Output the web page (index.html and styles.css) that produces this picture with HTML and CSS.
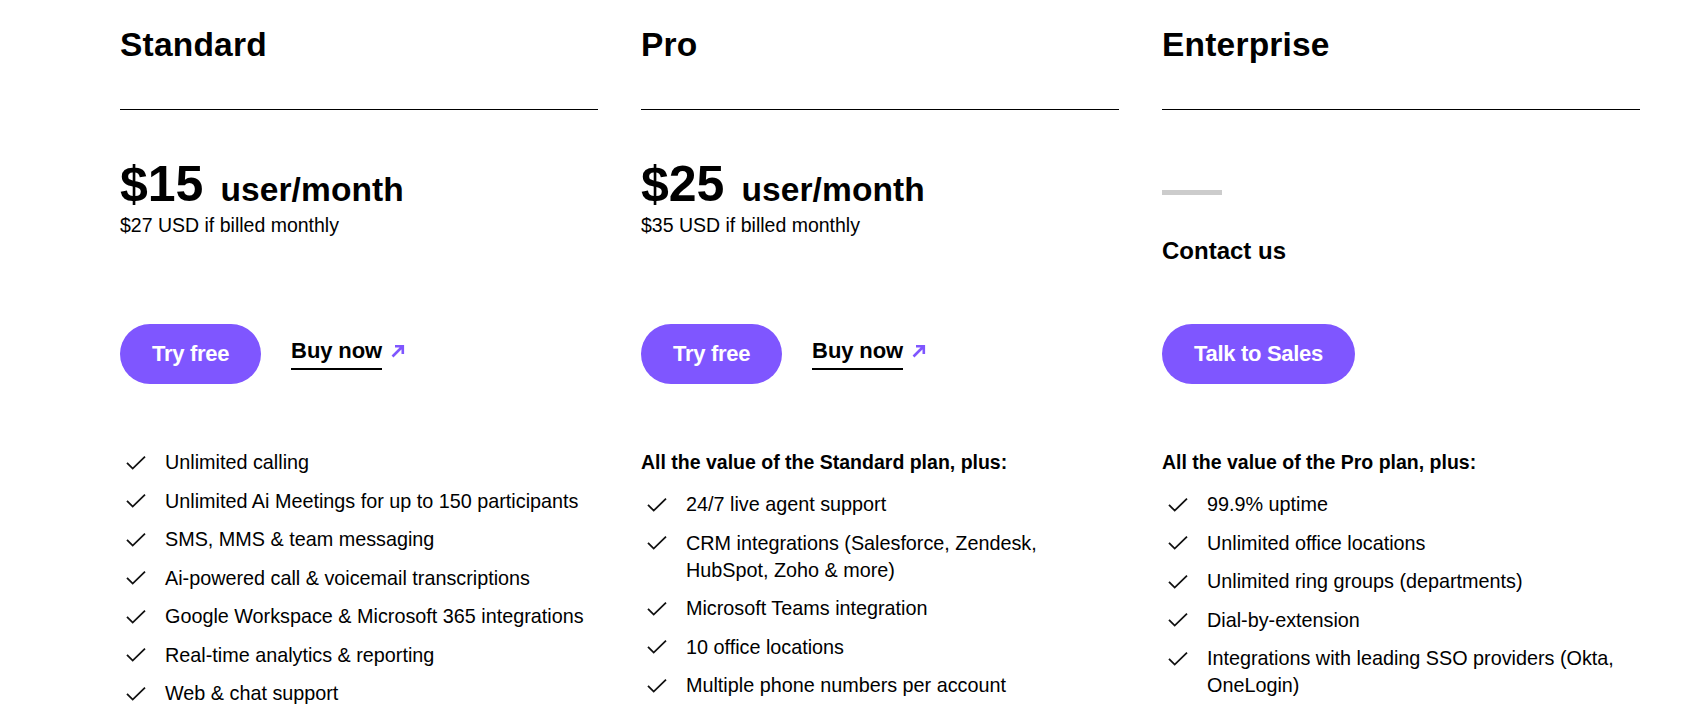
FILE: index.html
```html
<!DOCTYPE html>
<html lang="en">
<head>
<meta charset="utf-8">
<title>Pricing</title>
<link rel="stylesheet" href="styles.css">
</head>
<body>
<main class="plans">
  <section class="plan">
    <h2 class="plan-title">Standard</h2>
    <div class="divider"></div>
    <div class="pricing">
      <div class="price-line"><span class="price-num">$15</span><span class="price-unit">user/month</span></div>
      <div class="price-sub">$27 USD if billed monthly</div>
    </div>
    <div class="actions">
      <a class="btn">Try free</a>
      <a class="buy"><span class="buy-text">Buy now</span><svg class="buy-arrow" width="14" height="14" viewBox="0 0 14 14"><path d="M1.5 12.5 L11.5 2.5 M4 2.2 H11.8 V10" fill="none" stroke="#7f56ff" stroke-width="2.6"/></svg></a>
    </div>
    <ul class="features">
      <li><svg class="check" width="24" height="24" viewBox="0 0 24 24"><path d="M3 11.8 L8.7 17.6 L21 5.7" fill="none" stroke="#111" stroke-width="1.8"/></svg><span>Unlimited calling</span></li>
      <li><svg class="check" width="24" height="24" viewBox="0 0 24 24"><path d="M3 11.8 L8.7 17.6 L21 5.7" fill="none" stroke="#111" stroke-width="1.8"/></svg><span>Unlimited Ai Meetings for up to 150 participants</span></li>
      <li><svg class="check" width="24" height="24" viewBox="0 0 24 24"><path d="M3 11.8 L8.7 17.6 L21 5.7" fill="none" stroke="#111" stroke-width="1.8"/></svg><span>SMS, MMS &amp; team messaging</span></li>
      <li><svg class="check" width="24" height="24" viewBox="0 0 24 24"><path d="M3 11.8 L8.7 17.6 L21 5.7" fill="none" stroke="#111" stroke-width="1.8"/></svg><span>Ai-powered call &amp; voicemail transcriptions</span></li>
      <li><svg class="check" width="24" height="24" viewBox="0 0 24 24"><path d="M3 11.8 L8.7 17.6 L21 5.7" fill="none" stroke="#111" stroke-width="1.8"/></svg><span>Google Workspace &amp; Microsoft 365 integrations</span></li>
      <li><svg class="check" width="24" height="24" viewBox="0 0 24 24"><path d="M3 11.8 L8.7 17.6 L21 5.7" fill="none" stroke="#111" stroke-width="1.8"/></svg><span>Real-time analytics &amp; reporting</span></li>
      <li><svg class="check" width="24" height="24" viewBox="0 0 24 24"><path d="M3 11.8 L8.7 17.6 L21 5.7" fill="none" stroke="#111" stroke-width="1.8"/></svg><span>Web &amp; chat support</span></li>
    </ul>
  </section>

  <section class="plan">
    <h2 class="plan-title">Pro</h2>
    <div class="divider"></div>
    <div class="pricing">
      <div class="price-line"><span class="price-num">$25</span><span class="price-unit">user/month</span></div>
      <div class="price-sub">$35 USD if billed monthly</div>
    </div>
    <div class="actions">
      <a class="btn">Try free</a>
      <a class="buy"><span class="buy-text">Buy now</span><svg class="buy-arrow" width="14" height="14" viewBox="0 0 14 14"><path d="M1.5 12.5 L11.5 2.5 M4 2.2 H11.8 V10" fill="none" stroke="#7f56ff" stroke-width="2.6"/></svg></a>
    </div>
    <h3 class="features-head">All the value of the Standard plan, plus:</h3>
    <ul class="features">
      <li><svg class="check" width="24" height="24" viewBox="0 0 24 24"><path d="M3 11.8 L8.7 17.6 L21 5.7" fill="none" stroke="#111" stroke-width="1.8"/></svg><span>24/7 live agent support</span></li>
      <li><svg class="check" width="24" height="24" viewBox="0 0 24 24"><path d="M3 11.8 L8.7 17.6 L21 5.7" fill="none" stroke="#111" stroke-width="1.8"/></svg><span>CRM integrations (Salesforce, Zendesk, HubSpot, Zoho &amp; more)</span></li>
      <li><svg class="check" width="24" height="24" viewBox="0 0 24 24"><path d="M3 11.8 L8.7 17.6 L21 5.7" fill="none" stroke="#111" stroke-width="1.8"/></svg><span>Microsoft Teams integration</span></li>
      <li><svg class="check" width="24" height="24" viewBox="0 0 24 24"><path d="M3 11.8 L8.7 17.6 L21 5.7" fill="none" stroke="#111" stroke-width="1.8"/></svg><span>10 office locations</span></li>
      <li><svg class="check" width="24" height="24" viewBox="0 0 24 24"><path d="M3 11.8 L8.7 17.6 L21 5.7" fill="none" stroke="#111" stroke-width="1.8"/></svg><span>Multiple phone numbers per account</span></li>
    </ul>
  </section>

  <section class="plan">
    <h2 class="plan-title">Enterprise</h2>
    <div class="divider"></div>
    <div class="pricing">
      <div class="dash"></div>
      <div class="contact">Contact us</div>
    </div>
    <div class="actions">
      <a class="btn">Talk to Sales</a>
    </div>
    <h3 class="features-head">All the value of the Pro plan, plus:</h3>
    <ul class="features">
      <li><svg class="check" width="24" height="24" viewBox="0 0 24 24"><path d="M3 11.8 L8.7 17.6 L21 5.7" fill="none" stroke="#111" stroke-width="1.8"/></svg><span>99.9% uptime</span></li>
      <li><svg class="check" width="24" height="24" viewBox="0 0 24 24"><path d="M3 11.8 L8.7 17.6 L21 5.7" fill="none" stroke="#111" stroke-width="1.8"/></svg><span>Unlimited office locations</span></li>
      <li><svg class="check" width="24" height="24" viewBox="0 0 24 24"><path d="M3 11.8 L8.7 17.6 L21 5.7" fill="none" stroke="#111" stroke-width="1.8"/></svg><span>Unlimited ring groups (departments)</span></li>
      <li><svg class="check" width="24" height="24" viewBox="0 0 24 24"><path d="M3 11.8 L8.7 17.6 L21 5.7" fill="none" stroke="#111" stroke-width="1.8"/></svg><span>Dial-by-extension</span></li>
      <li><svg class="check" width="24" height="24" viewBox="0 0 24 24"><path d="M3 11.8 L8.7 17.6 L21 5.7" fill="none" stroke="#111" stroke-width="1.8"/></svg><span>Integrations with leading SSO providers (Okta, OneLogin)</span></li>
    </ul>
  </section>
</main>
</body>
</html>
```

FILE: styles.css
```css
* { box-sizing: border-box; }

html, body {
  margin: 0;
  padding: 0;
  background: #fff;
}

body {
  font-family: "Liberation Sans", Arial, sans-serif;
  color: #000;
  overflow: hidden;
}

.plans {
  display: grid;
  grid-template-columns: repeat(3, 478px);
  column-gap: 43px;
  padding-left: 120px;
  padding-top: 25px;
}

.plan {
  display: flex;
  flex-direction: column;
}

.plan-title {
  margin: 0;
  font-size: 33.5px;
  line-height: 40px;
  font-weight: 700;
  letter-spacing: 0.2px;
}

.divider {
  margin-top: 44px;
  border-top: 1px solid #000;
}

.pricing {
  height: 214px;
  padding-top: 46px;
}

.price-line {
  display: flex;
  align-items: baseline;
  line-height: 56px;
  height: 56px;
}

.price-num {
  font-size: 50px;
  font-weight: 700;
  margin-right: 17px;
}

.price-unit {
  font-size: 33.5px;
  font-weight: 700;
  letter-spacing: 0.1px;
}

.price-sub {
  margin-top: 1px;
  font-size: 19.5px;
  line-height: 24px;
}

.dash {
  margin-top: 34px;
  width: 60px;
  height: 5px;
  background: #cccccc;
}

.contact {
  margin-top: 41px;
  font-size: 24px;
  line-height: 30px;
  font-weight: 700;
}

.actions {
  display: flex;
  align-items: center;
  gap: 30px;
  height: 60px;
}

.btn {
  display: inline-flex;
  align-items: center;
  justify-content: center;
  height: 60px;
  padding: 0 32px;
  border-radius: 30px;
  background: #7f56ff;
  color: #fff;
  font-size: 22px;
  font-weight: 700;
  letter-spacing: -0.3px;
}

.buy {
  display: inline-flex;
  align-items: center;
  color: #000;
}

.buy-text {
  font-size: 22px;
  line-height: 26px;
  font-weight: 700;
  padding-bottom: 4px;
  border-bottom: 2.5px solid #000;
  letter-spacing: -0.1px;
}

.buy-arrow {
  margin-left: 9px;
  margin-bottom: 7px;
}

.features-head {
  margin: 65px 0 0;
  font-size: 19.5px;
  line-height: 26px;
  font-weight: 700;
}

.features {
  list-style: none;
  margin: 16px 0 0;
  padding: 0;
  display: flex;
  flex-direction: column;
  gap: 11.5px;
}

.plan:first-child .features {
  margin-top: 65px;
}

.features li {
  display: flex;
  align-items: flex-start;
  font-size: 19.8px;
  line-height: 27px;
  padding-right: 3px;
}

.check {
  flex: none;
  margin-left: 4px;
  margin-right: 17px;
  margin-top: 1.5px;
}
```
